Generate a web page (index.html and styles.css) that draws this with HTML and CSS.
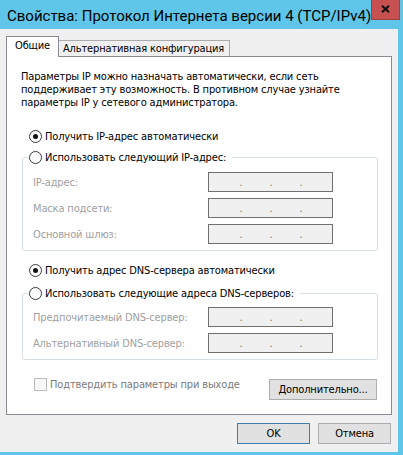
FILE: index.html
```html
<!DOCTYPE html>
<html lang="ru">
<head>
<meta charset="utf-8">
<title>Свойства: Протокол Интернета версии 4 (TCP/IPv4)</title>
<link rel="stylesheet" href="styles.css">
</head>
<body>
<div class="window">
  <div class="titlebar">
    <span class="title">Свойства: Протокол Интернета версии 4 (TCP/IPv4)</span>
    <span class="close"><svg width="9" height="8" viewBox="0 0 9 8"><path d="M1 0.8 L8 7.2 M8 0.8 L1 7.2" stroke="#111" stroke-width="2.1" fill="none"/></svg></span>
  </div>
  <div class="client">
    <div class="tabs">
      <div class="tab active">Общие</div>
      <div class="tab">Альтернативная конфигурация</div>
    </div>
    <div class="panel">
      <p class="intro">Параметры IP можно назначать автоматически, если сеть<br>поддерживает эту возможность. В противном случае узнайте<br>параметры IP у сетевого администратора.</p>
      <div class="option opt-ip"><span class="radio on"></span><span>Получить IP-адрес автоматически</span></div>
      <fieldset class="group group-ip">
        <legend class="option legend"><span class="radio"></span><span>Использовать следующий IP-адрес:</span></legend>
        <div class="field first"><span class="label">IP-адрес:</span><span class="ipbox"><span class="dot">.</span><span class="dot">.</span><span class="dot">.</span></span></div>
        <div class="field"><span class="label">Маска подсети:</span><span class="ipbox"><span class="dot">.</span><span class="dot">.</span><span class="dot">.</span></span></div>
        <div class="field"><span class="label">Основной шлюз:</span><span class="ipbox"><span class="dot">.</span><span class="dot">.</span><span class="dot">.</span></span></div>
      </fieldset>
      <div class="option opt-dns"><span class="radio on"></span><span>Получить адрес DNS-сервера автоматически</span></div>
      <fieldset class="group group-dns">
        <legend class="option legend"><span class="radio"></span><span>Использовать следующие адреса DNS-серверов:</span></legend>
        <div class="field first dns"><span class="label">Предпочитаемый DNS-сервер:</span><span class="ipbox"><span class="dot">.</span><span class="dot">.</span><span class="dot">.</span></span></div>
        <div class="field"><span class="label">Альтернативный DNS-сервер:</span><span class="ipbox"><span class="dot">.</span><span class="dot">.</span><span class="dot">.</span></span></div>
      </fieldset>
      <div class="bottomrow">
        <span class="check"></span><span class="checklabel">Подтвердить параметры при выходе</span>
        <span class="btn advanced">Дополнительно...</span>
      </div>
    </div>
    <div class="actions">
      <span class="btn default">OK</span>
      <span class="btn">Отмена</span>
    </div>
  </div>
</div>
</body>
</html>
```

FILE: styles.css
```css
* { box-sizing: border-box; }
html, body { margin: 0; padding: 0; }
body {
  width: 403px;
  height: 455px;
  overflow: hidden;
  background: #5fc6e9;
  font-family: "DejaVu Sans Condensed", "DejaVu Sans", sans-serif;
  font-size: 11px;
  line-height: 13px;
  letter-spacing: -0.15px;
  color: #000;
}
.window { display: flex; flex-direction: column; height: 455px; }

.titlebar { height: 29px; flex: none; display: flex; align-items: flex-start; padding-left: 7px; }
.title {
  font-family: Roboto, "Noto Sans", sans-serif;
  font-size: 15px;
  line-height: 20px;
  letter-spacing: 0;
  margin-top: 6px;
  color: #000;
  white-space: nowrap;
}
.close {
  margin-left: auto;
  margin-right: 3px;
  width: 33px;
  height: 20px;
  background: #c75050;
  border: 1px solid #a14040;
  border-top: none;
  display: flex;
  justify-content: center;
  align-items: flex-start;
  padding-top: 5px;
}
.close svg { display: block; }

.client {
  flex: 1;
  background: #f0f0f0;
  margin: 0 5px 3px 0;
  padding: 7px 6px 0 6px;
  display: flex;
  flex-direction: column;
}

.tabs { display: flex; align-items: flex-end; height: 20px; }
.tab {
  border: 1px solid #acacac;
  border-bottom: none;
  background: #f0f0f0;
  height: 16px;
  padding: 1px 5px 0 4px;
  margin-left: -1px;
  white-space: nowrap;
}
.tab.active {
  position: relative;
  z-index: 1;
  margin-left: 0;
  height: 21px;
  margin-bottom: -1px;
  background: #fff;
  border-color: #898c95;
  padding: 2px 8px 0 8px;
}

.panel {
  height: 359px;
  background: #fff;
  border: 1px solid #898c95;
  padding: 13px 13px 0 14px;
  display: flex;
  flex-direction: column;
}
.intro { margin: 0; white-space: nowrap; }

.option { display: flex; align-items: center; height: 13px; gap: 3px; white-space: nowrap; }
.opt-ip { margin: 21px 0 0 8px; }
.opt-dns { margin: 13px 0 0 8px; }
.radio {
  flex: none;
  width: 13px;
  height: 13px;
  border: 1px solid #3a3a3a;
  border-radius: 50%;
  background: #fff;
  display: flex;
  align-items: center;
  justify-content: center;
}
.radio.on::after {
  content: "";
  width: 5px;
  height: 5px;
  border-radius: 50%;
  background: #111;
}

.group {
  margin: 0 0 0 1px;
  padding: 0 0 6px 0;
  border: 1px solid #d5dfe5;
  border-radius: 3px;
  min-width: 0;
}
.group-ip { margin-top: 8px; }
.group-dns { margin-top: 10px; }
.legend { margin-left: 6px; padding: 0 6px 0 0; }

.field { display: flex; align-items: center; height: 20px; margin: 6px 0 0 10px; }
.field.first { margin-top: 8px; }
.field.first.dns { margin-top: 7px; }
.label { width: 175px; flex: none; color: #a0a0a0; white-space: nowrap; }
.ipbox {
  width: 125px;
  height: 20px;
  border: 1px solid #707070;
  background: #f0f0f0;
  display: flex;
  align-items: center;
  padding-left: 17px;
}
.dot { width: 30px; text-align: center; color: #707070; }

.bottomrow { display: flex; align-items: flex-start; margin: 18px 1px 0 13px; }
.check {
  flex: none;
  width: 13px;
  height: 13px;
  border: 1px solid #bcbcbc;
  background: #f7f7f7;
}
.checklabel { margin-left: 3px; color: #7a7a7a; white-space: nowrap; }

.btn {
  display: flex;
  align-items: center;
  justify-content: center;
  height: 21px;
  width: 73px;
  background: #e1e1e1;
  border: 1px solid #adadad;
  white-space: nowrap;
}
.btn.default { border-color: #3c7fb1; }
.advanced { margin: 1px 0 0 auto; width: 108px; }

.actions { display: flex; justify-content: flex-end; gap: 8px; margin: 8px 1px 0 0; }
```
